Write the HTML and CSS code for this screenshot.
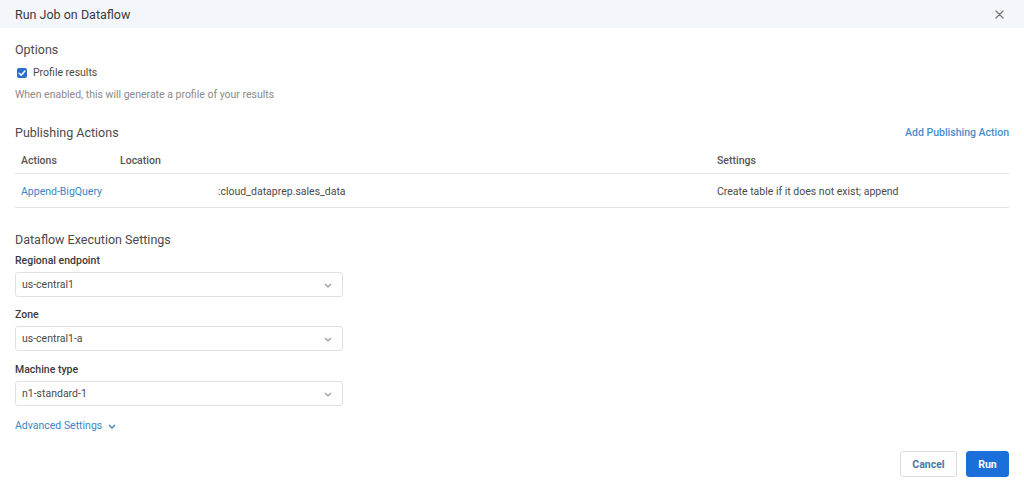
FILE: index.html
```html
<!DOCTYPE html>
<html>
<head>
<meta charset="utf-8">
<link rel="stylesheet" href="styles.css">
</head>
<body>
<div class="dialog">
  <div class="header">
    <span class="title">Run Job on Dataflow</span>
    <span class="close">
      <svg width="9" height="9" viewBox="0 0 9 9"><path d="M1 1L8 8M8 1L1 8" stroke="#777" stroke-width="1.3" stroke-linecap="round"/></svg>
    </span>
  </div>
  <div class="body">
    <div class="section-title opt">Options</div>
    <label class="check-row">
      <span class="checkbox"><svg width="10" height="10" viewBox="0 0 10 10"><path d="M2.2 5.2L4.2 7.2L7.9 3" fill="none" stroke="#fff" stroke-width="1.5" stroke-linecap="round" stroke-linejoin="round"/></svg></span>
      <span>Profile results</span>
    </label>
    <div class="desc">When enabled, this will generate a profile of your results</div>

    <div class="pub-head">
      <span class="section-title">Publishing Actions</span>
      <a class="link strong">Add Publishing Action</a>
    </div>
    <div class="table">
      <div class="row thead">
        <div class="cell">Actions</div>
        <div class="cell">Location</div>
        <div class="cell">Settings</div>
      </div>
      <div class="row tbody">
        <div class="cell link">Append-BigQuery</div>
        <div class="cell"><span class="loc">:cloud_dataprep.sales_data</span></div>
        <div class="cell">Create table if it does not exist; append</div>
      </div>
    </div>

    <div class="section-title exec">Dataflow Execution Settings</div>
    <div class="field first">
      <div class="label">Regional endpoint</div>
      <div class="select"><span>us-central1</span><svg class="chev" width="8" height="5" viewBox="0 0 8 5"><path d="M1 1L4 4L7 1" fill="none" stroke="#999" stroke-width="1.2"/></svg></div>
    </div>
    <div class="field">
      <div class="label">Zone</div>
      <div class="select"><span>us-central1-a</span><svg class="chev" width="8" height="5" viewBox="0 0 8 5"><path d="M1 1L4 4L7 1" fill="none" stroke="#999" stroke-width="1.2"/></svg></div>
    </div>
    <div class="field third">
      <div class="label">Machine type</div>
      <div class="select"><span>n1-standard-1</span><svg class="chev" width="8" height="5" viewBox="0 0 8 5"><path d="M1 1L4 4L7 1" fill="none" stroke="#999" stroke-width="1.2"/></svg></div>
    </div>
    <div class="advanced link">Advanced Settings <svg width="8" height="5" viewBox="0 0 8 5"><path d="M1 1L4 4L7 1" fill="none" stroke="#3a85c6" stroke-width="1.3"/></svg></div>

    <div class="footer">
      <button class="btn cancel">Cancel</button>
      <button class="btn run">Run</button>
    </div>
  </div>
</div>
</body>
</html>
```
FILE: styles.css
```css
* { box-sizing: border-box; }
html, body { margin: 0; padding: 0; }
body {
  font-family: Roboto, "Liberation Sans", Arial, sans-serif;
  color: #4a4a4a;
  background: #fff;
  width: 1024px;
  height: 492px;
  overflow: hidden;
}
.header {
  height: 28px;
  background: #f3f6fa;
  display: flex;
  align-items: center;
  justify-content: space-between;
  padding: 0 20px 0 15px;
}
.title { font-size: 12.5px; color: #3a3a3a; }
.close { display: flex; align-items: center; }
.body { padding: 0 15px; }
.section-title { font-size: 12.5px; line-height: 16px; color: #4a4a4a; }
.opt { margin-top: 14px; }
.check-row {
  margin-top: 7px;
  display: flex;
  align-items: center;
  gap: 6px;
  font-size: 10.5px;
  line-height: 16px;
  color: #4a4a4a;
  padding-left: 2px;
}
.checkbox {
  width: 10px; height: 10px;
  background: #2a6fcf;
  border-radius: 2px;
  display: flex; align-items: center; justify-content: center;
}
.desc { margin-top: 7px; font-size: 10.5px; line-height: 14px; color: #8a8a8a; }
.pub-head {
  margin-top: 23px;
  display: flex;
  justify-content: space-between;
  align-items: center;
  line-height: 16px;
}
.link { color: #3a85c6; font-size: 11px; }
.pub-head .link { font-size: 10.5px; color: #4a8ec9; }
.strong { font-weight: 500; }
.table { margin-top: 5px; }
.row {
  display: grid;
  grid-template-columns: 99px 597px 1fr;
  align-items: center;
  border-bottom: 1px solid #e2e2e2;
  font-size: 10.5px;
}
.thead { height: 28px; color: #555; font-weight: 500; padding-top: 2px; }
.tbody { height: 34px; color: #4a4a4a; padding-top: 1px; }
.cell { padding-left: 6px; }
.tbody .cell.link { color: #3a85c6; font-size: 10.5px; }
.loc { padding-left: 98px; }
.exec { margin-top: 24px; }
.field { display: flex; flex-direction: column; }
.field .label { font-size: 10.5px; line-height: 14px; font-weight: 500; color: #3a3a3a; }
.field.first { margin-top: 6px; }
.field + .field { margin-top: 11px; }
.field.third { margin-top: 12px; }
.select {
  margin-top: 4px;
  width: 328px;
  height: 25px;
  border: 1px solid #e0e0e0;
  border-radius: 3px;
  display: flex;
  align-items: center;
  justify-content: space-between;
  padding: 0 10px 0 6px;
  font-size: 10.5px;
  color: #4a4a4a;
}
.chev { margin-top: 1px; }
.advanced {
  margin-top: 13px;
  line-height: 14px;
  display: flex;
  align-items: center;
  gap: 6px;
  font-size: 10.5px;
}
.footer {
  margin-top: 18px;
  display: flex;
  justify-content: flex-end;
  gap: 9px;
}
.btn {
  height: 26px;
  font-family: Roboto, "Liberation Sans", Arial, sans-serif;
  font-size: 10.5px;
  font-weight: 700;
  border-radius: 3px;
  cursor: pointer;
}
.cancel {
  width: 57px;
  background: #fff;
  border: 1px solid #dcdcdc;
  color: #4a78a8;
}
.run {
  width: 43px;
  background: #1a6fd8;
  border: 1px solid #1a6fd8;
  color: #fff;
}
```
